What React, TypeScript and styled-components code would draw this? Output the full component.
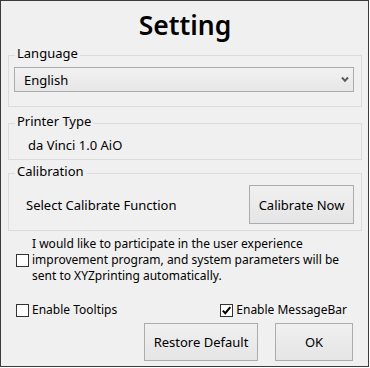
import React from "react";
import styled, { createGlobalStyle } from "styled-components";

const Global = createGlobalStyle`
  html, body { margin: 0; padding: 0; background: #ffffff; }
  * { box-sizing: border-box; }
`;

const Window = styled.div`
  width: 369px;
  height: 367px;
  border: 1px solid #3b3b3b;
  background: #f0f0f0;
  padding: 0 6px 0 7px;
  display: flex;
  flex-direction: column;
  font-family: "Noto Sans", "Open Sans", sans-serif;
  font-size: 13px;
  line-height: 16px;
  color: #000;
`;

const Title = styled.h1`
  margin: 0;
  padding-top: 5px;
  height: 44px;
  font-size: 26.5px;
  line-height: 39px;
  font-weight: 600;
  text-align: center;
`;

const Group = styled.fieldset<{ $gap?: number; $pad: string }>`
  margin: ${(p) => p.$gap ?? 0}px 0 0 0;
  padding: ${(p) => p.$pad};
  border: 1px solid #dcdcdc;
  min-width: 0;
`;

const Legend = styled.legend`
  margin-left: 6px;
  padding: 0 2px 4px 2px;
  line-height: 16px;
  font-size: 13px;
`;

const Inset = styled.div<{ $l: number; $r: number }>`
  padding: 0 ${(p) => p.$r}px 0 ${(p) => p.$l}px;
`;

const SelectWrap = styled.div`
  position: relative;
  height: 25px;
`;

const Select = styled.select`
  appearance: none;
  -webkit-appearance: none;
  width: 100%;
  height: 25px;
  margin: 0;
  border: 1px solid #acacac;
  border-radius: 0;
  background: linear-gradient(#f2f2f2, #e6e6e6);
  padding: 0 0 0 9px;
  font-family: inherit;
  font-size: 13px;
  color: #000;
  outline: none;
`;

const Chevron = styled.svg`
  position: absolute;
  right: 5px;
  top: 9px;
  pointer-events: none;
`;

const Value = styled.div`
  white-space: nowrap;
`;

const CalRow = styled.div`
  display: flex;
  align-items: center;
  justify-content: space-between;
`;

const Button = styled.button<{ $w: number; $h: number }>`
  width: ${(p) => p.$w}px;
  height: ${(p) => p.$h}px;
  margin: 0;
  padding: 0;
  border: 1px solid #acacac;
  border-radius: 0;
  background: linear-gradient(#f0f0f0, #e5e5e5);
  font-family: inherit;
  font-size: 13px;
  color: #000;
`;

const Consent = styled.label`
  display: flex;
  align-items: center;
  gap: 3px;
  margin: 5px 0 0 8px;
  white-space: nowrap;
  font-size: 12px;
`;

const Box = styled.span`
  display: inline-flex;
  align-items: center;
  justify-content: center;
  flex: none;
  width: 13px;
  height: 13px;
  border: 1px solid #333333;
  background: #ffffff;
`;

const Options = styled.div`
  display: flex;
  justify-content: space-between;
  margin: 18px 15px 0 8px;
  font-size: 12px;
`;

const Option = styled.label`
  display: flex;
  align-items: center;
  gap: 3px;
  white-space: nowrap;
`;

const Actions = styled.div`
  display: flex;
  justify-content: flex-end;
  gap: 17px;
  margin: 5px 9px 0 0;
`;

function Check({ checked }: { checked?: boolean }) {
  return (
    <Box>
      {checked && (
        <svg width="11" height="11" viewBox="0 0 11 11">
          <path d="M1.8 5.6 L4.3 8.2 L9.3 2.2" fill="none" stroke="#000" strokeWidth="2" />
        </svg>
      )}
    </Box>
  );
}

export default function App() {
  return (
    <>
      <Global />
      <Window>
        <Title>Setting</Title>
        <Group $pad="2px 0 14px 0">
          <Legend>Language</Legend>
          <Inset $l={5} $r={7}>
            <SelectWrap>
              <Select defaultValue="English">
                <option>English</option>
              </Select>
              <Chevron width="8" height="7" viewBox="0 0 8 7">
                <path d="M1 1.5 L4 4.8 L7 1.5" fill="none" stroke="#5a5a5a" strokeWidth="2" />
              </Chevron>
            </SelectWrap>
          </Inset>
        </Group>
        <Group $gap={6} $pad="4px 0 6px 0">
          <Legend>Printer Type</Legend>
          <Inset $l={19} $r={7}>
            <Value>da Vinci 1.0 AiO</Value>
          </Inset>
        </Group>
        <Group $gap={3} $pad="2px 0 6px 0">
          <Legend>Calibration</Legend>
          <Inset $l={17} $r={7}>
            <CalRow>
              <Value>Select Calibrate Function</Value>
              <Button $w={105} $h={39}>Calibrate Now</Button>
            </CalRow>
          </Inset>
        </Group>
        <Consent>
          <Check />
          <span>
            I would like to participate in the user experience
            <br />
            improvement program, and system parameters will be
            <br />
            sent to XYZprinting automatically.
          </span>
        </Consent>
        <Options>
          <Option>
            <Check />
            Enable Tooltips
          </Option>
          <Option>
            <Check checked />
            Enable MessageBar
          </Option>
        </Options>
        <Actions>
          <Button $w={114} $h={38}>Restore Default</Button>
          <Button $w={78} $h={38}>OK</Button>
        </Actions>
      </Window>
    </>
  );
}
